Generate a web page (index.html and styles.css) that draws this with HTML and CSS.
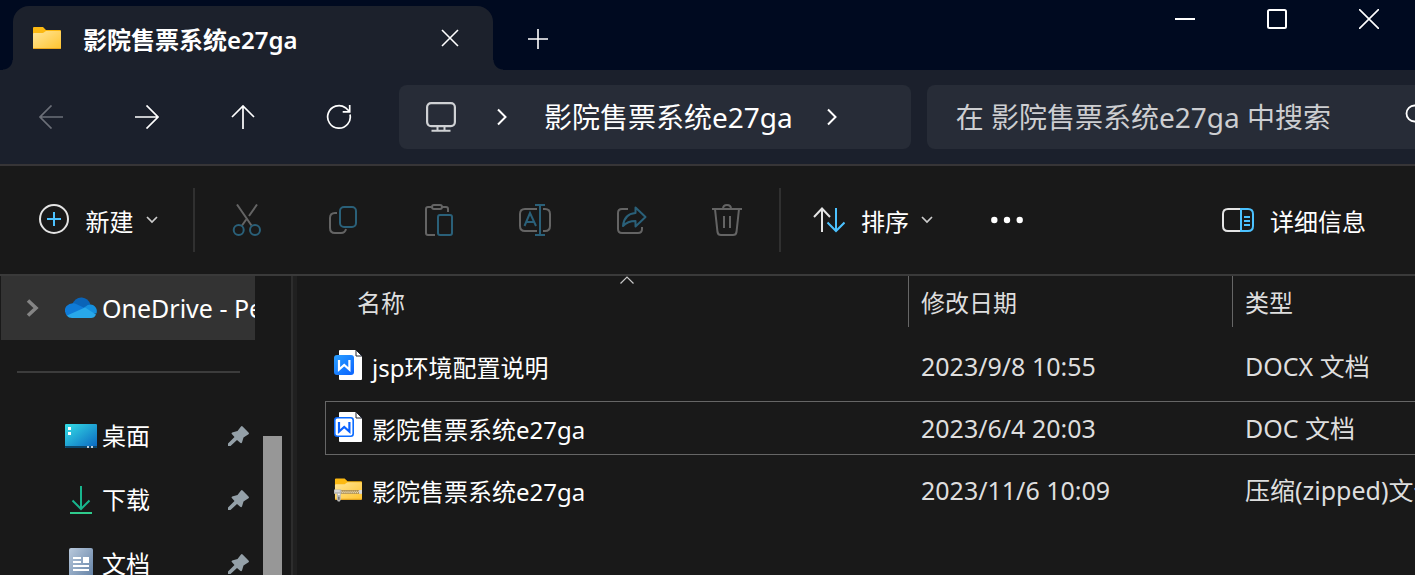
FILE: index.html
```html
<!DOCTYPE html>
<html lang="zh-CN">
<head>
<meta charset="utf-8">
<title>影院售票系统e27ga</title>
<link rel="stylesheet" href="styles.css">
</head>
<body>
<header class="titlebar">
  <div class="tab">
    <svg class="tab-icon" width="28" height="22" viewBox="0 0 28 22">
      <defs><linearGradient id="fold" x1="0" y1="0" x2="1" y2="1"><stop offset="0" stop-color="#ffe69a"/><stop offset="1" stop-color="#ffc42e"/></linearGradient></defs>
      <path d="M0 1q0-1 1-1h9l3 3h14q1 0 1 1v5H0z" fill="#fcb912"/>
      <path d="M0 7q0-1 1-1h9l3-2h14q1 0 1 1v16q0 1-1 1H1q-1 0-1-1z" fill="url(#fold)"/>
      <path d="M0 21h28q0 1-1 1H1q-1 0-1-1z" fill="#eaa51c"/>
    </svg>
    <span class="tab-title">影院售票系统e27ga</span>
    <button class="plain tab-close" aria-label="关闭标签页"><svg width="18" height="18" viewBox="0 0 18 18"><path d="M1 1l16 16M17 1L1 17" stroke="#fff" stroke-width="1.6" fill="none"/></svg></button>
  </div>
  <button class="plain tab-new" aria-label="新标签页"><svg width="20" height="20" viewBox="0 0 20 20"><path d="M0 10h20M10 0v20" stroke="#fff" stroke-width="1.6"/></svg></button>
  <div class="window-controls">
    <button class="plain" aria-label="最小化"><svg width="20" height="20" viewBox="0 0 20 20"><path d="M0 10h20" stroke="#fff" stroke-width="2"/></svg></button>
    <button class="plain" aria-label="最大化"><svg width="20" height="20" viewBox="0 0 20 20"><rect x="1" y="1" width="18" height="18" rx="1.5" fill="none" stroke="#fff" stroke-width="2"/></svg></button>
    <button class="plain" aria-label="关闭"><svg width="20" height="20" viewBox="0 0 20 20"><path d="M0 0l20 20M20 0L0 20" stroke="#fff" stroke-width="1.6"/></svg></button>
  </div>
</header>

<nav class="navbar">
  <div class="nav-buttons">
    <button class="plain" aria-label="后退" disabled><svg width="24" height="24" viewBox="0 0 24 24"><path d="M24 12H1M12.500.5L1 12l11.500 11.500" fill="none" stroke="#6b6f78" stroke-width="1.7"/></svg></button>
    <button class="plain" aria-label="前进"><svg width="24" height="24" viewBox="0 0 24 24"><path d="M0 12h23M11.500.5L23 12 11.500 23.500" fill="none" stroke="#fff" stroke-width="1.7"/></svg></button>
    <button class="plain" aria-label="向上"><svg width="24" height="24" viewBox="0 0 24 24"><path d="M12 24V1M1 12L12 1l11 11" fill="none" stroke="#fff" stroke-width="1.7"/></svg></button>
    <button class="plain" aria-label="刷新"><svg width="26" height="26" viewBox="0 0 26 26"><path d="M24 10.500A11.300 11.300 0 1 1 19.500 3.700L23.500 7.500M23.700 1v6.800h-7" fill="none" stroke="#fff" stroke-width="1.7"/></svg></button>
  </div>
  <div class="address">
    <svg class="pc" width="30" height="30" viewBox="0 0 30 30" fill="none" stroke="#cfd1d4"><rect x="1.100" y="1.100" width="27.800" height="23" rx="4" stroke-width="2.200"/><path d="M11.500 24v4M18.500 24v4M5.500 28.700h19" stroke-width="2"/></svg>
    <svg width="10" height="18" viewBox="0 0 10 18"><path d="M1 1.500L8.500 9 1 16.500" fill="none" stroke="#fff" stroke-width="2"/></svg>
    <span class="crumb">影院售票系统e27ga</span>
    <svg width="10" height="18" viewBox="0 0 10 18"><path d="M1 1.500L8.500 9 1 16.500" fill="none" stroke="#fff" stroke-width="2"/></svg>
  </div>
  <div class="search">
    <input type="text" aria-label="搜索" placeholder="在 影院售票系统e27ga 中搜索">
    <span class="search-icon"><svg width="26" height="26" viewBox="0 0 26 26"><path d="M16 15l9 9" stroke="#fff" stroke-width="1.800"/><circle cx="9.500" cy="9.500" r="8" fill="none" stroke="#fff" stroke-width="1.800"/></svg></span>
  </div>
</nav>

<div class="commands">
  <button class="plain cmd-new">
    <svg width="32" height="32" viewBox="0 0 32 32" fill="none"><circle cx="16" cy="15" r="14" stroke="#e4e4e4" stroke-width="2"/><path d="M9 15h14M16 8v14" stroke="#4cc2ff" stroke-width="2"/></svg>
    <span>新建</span>
    <svg class="caret" width="12" height="8" viewBox="0 0 12 8"><path d="M1 1l5 5 5-5" fill="none" stroke="#ccc" stroke-width="1.700"/></svg>
  </button>
  <span class="divider"></span>
  <div class="cmd-icons">
    <button class="plain" aria-label="剪切" disabled><svg width="32" height="32" viewBox="0 0 32 32" fill="none" stroke-width="2"><path d="M6 0.500l14.500 21M26 0.500l-8 11.500M15.200 15.500l-4.200 6" stroke="#646464"/><circle cx="7.700" cy="26" r="5" stroke="#2a6079"/><circle cx="24" cy="26" r="5" stroke="#2a6079"/></svg></button>
    <button class="plain" aria-label="复制" disabled><svg width="32" height="32" viewBox="0 0 32 32" fill="none" stroke-width="2"><path d="M10 9H8q-5 0-5 5v10q0 5 5 5h6q4 0 5-4" stroke="#646464"/><rect x="13" y="3" width="16" height="20" rx="4" stroke="#2a6079"/></svg></button>
    <button class="plain" aria-label="粘贴" disabled><svg width="32" height="32" viewBox="0 0 32 32" fill="none" stroke-width="2"><path d="M8.500 3H5q-2 0-2 2v24q0 2 2 2h7M19 3h4q2 0 2 2v3" stroke="#646464"/><rect x="9" y="1" width="10" height="4" rx="2" stroke="#646464"/><rect x="15" y="11" width="14" height="20" rx="2" stroke="#2a6079"/></svg></button>
    <button class="plain" aria-label="重命名" disabled><svg width="32" height="32" viewBox="0 0 32 32" fill="none" stroke-width="2"><path d="M18 5H6Q1 5 1 10v12q0 5 5 5h12M24 5h2q5 0 5 5v12q0 5-5 5h-2" stroke="#646464"/><path d="M16 1h10M21 1v30M16 31h10M5.500 22l5.500-13 6 13M7.500 18h8" stroke="#2a6079"/></svg></button>
    <button class="plain" aria-label="共享" disabled><svg width="32" height="32" viewBox="0 0 32 32" fill="none" stroke-width="2"><path d="M13 5H7Q3 5 3 9v16q0 4 4 4h16q4 0 4-4v-2" stroke="#646464"/><path d="M20.500 3.500l10 9.500-10 9.500v-5.500q-8 0-12.500 5 1-12 12.500-13z" stroke="#2a6079" stroke-linejoin="round"/></svg></button>
    <button class="plain" aria-label="删除" disabled><svg width="32" height="32" viewBox="0 0 32 32" fill="none" stroke="#646464" stroke-width="2"><path d="M1 5h30M12 5q0-4 4-4t4 4M4 5l2.500 23q.5 3 3.500 3h12q3 0 3.500-3L28 5M13 12v12M19 12v12"/></svg></button>
  </div>
  <span class="divider"></span>
  <button class="plain cmd-sort">
    <svg width="32" height="32" viewBox="0 0 32 32" fill="none" stroke-width="2"><path d="M9 28V5M1 13l8-8.500 8 8.500" stroke="#e4e4e4"/><path d="M23 4v23M14.500 18.500l8.500 8.500 8.500-8.500" stroke="#4cc2ff"/></svg>
    <span>排序</span>
    <svg class="caret" width="12" height="8" viewBox="0 0 12 8"><path d="M1 1l5 5 5-5" fill="none" stroke="#ccc" stroke-width="1.700"/></svg>
  </button>
  <button class="plain cmd-more" aria-label="更多"><svg width="32" height="8" viewBox="0 0 32 8" fill="#fff"><circle cx="3.300" cy="4" r="3.200"/><circle cx="16" cy="4" r="3.200"/><circle cx="28.700" cy="4" r="3.200"/></svg></button>
  <button class="plain cmd-details">
    <svg width="32" height="32" viewBox="0 0 32 32" fill="none" stroke-width="2"><path d="M19 5H6Q1 5 1 10v12q0 5 5 5h13" stroke="#e4e4e4"/><path d="M19 5h7q5 0 5 5v12q0 5-5 5h-7zM22 13h6M22 17h6M22 21h6" stroke="#4cc2ff"/></svg>
    <span>详细信息</span>
  </button>
</div>

<main class="content">
  <aside class="sidebar">
    <div class="tree">
      <a class="node drive" href="#">
        <svg class="expander" width="14" height="20" viewBox="0 0 14 20"><path d="M2 2.500L10 10l-8 7.500" fill="none" stroke="#858585" stroke-width="3.600"/></svg>
        <svg class="node-icon" width="32" height="22" viewBox="0 0 32 22"><path d="M7 8Q10 0 17 .5q6 .5 8.500 7L16 14z" fill="#0a64b8"/><path d="M2 19Q-2 13 1.500 9 5 5.500 10 6.500L22 12 4 20z" fill="#0f7bd8"/><path d="M20 10q4-3.500 8-2 5 3 3.500 8.500L22 17l-6-4z" fill="#1490df"/><path d="M2 18.500L20 10.500l11 7Q29.500 21 26 21H7q-3.500 0-5-2.500z" fill="#28a8ea"/></svg>
        <span>OneDrive - Personal</span>
      </a>
      <hr class="tree-rule">
      <a class="node" href="#">
        <svg class="node-icon" width="32" height="24" viewBox="0 0 32 24"><defs><linearGradient id="desk" x1="0" y1="0" x2="1" y2="1"><stop offset="0" stop-color="#35dfe6"/><stop offset="1" stop-color="#0a64c0"/></linearGradient></defs><rect width="32" height="24" rx="1" fill="url(#desk)"/><path d="M0 22h32v1q0 1-1 1H1q-1 0-1-1z" fill="#0b466b"/><path d="M3 3h3v3H3zM3 8h3v3H3z" fill="#fff"/><path d="M22 22h2v2h-2zM26 22h2v2h-2z" fill="#bcd"/></svg>
        <span>桌面</span>
        <svg class="pin" width="21" height="20" viewBox="0 0 21 20"><path d="M13 0.500Q13.800-.3 14.600.5L20.500 6.500q.9 1 0 1.800L15.500 11.500 14 16.500q-.6 1.200-1.800.3L9 14 2.500 20H0v-2.500L6.500 11 3.800 8q-.7-1 .4-1.600L9.500 5z" fill="#94a0a8"/></svg>
      </a>
      <a class="node" href="#">
        <svg class="node-icon" width="32" height="28" viewBox="0 0 32 28" fill="none" stroke-width="2"><path d="M16 0v23M7.500 14.500L16 23l8.500-8.500" stroke="#18b58d"/><path d="M5 27h22" stroke="#2fcb8d"/></svg>
        <span>下载</span>
        <svg class="pin" width="21" height="20" viewBox="0 0 21 20"><path d="M13 0.500Q13.800-.3 14.600.5L20.500 6.500q.9 1 0 1.800L15.500 11.500 14 16.500q-.6 1.200-1.800.3L9 14 2.500 20H0v-2.500L6.500 11 3.800 8q-.7-1 .4-1.600L9.500 5z" fill="#94a0a8"/></svg>
      </a>
      <a class="node" href="#">
        <svg class="node-icon" width="32" height="32" viewBox="0 0 32 32"><defs><linearGradient id="docs" x1="0" y1="0" x2="1" y2="1"><stop offset="0" stop-color="#b9c9dc"/><stop offset="1" stop-color="#5f7ea3"/></linearGradient></defs><rect x="4" width="24" height="32" rx="2" fill="url(#docs)"/><path d="M8 9h8v2H8zM8 13h8v2H8zM18 9h6v6h-6zM8 17h16v2H8zM8 21h16v2H8z" fill="#fff"/></svg>
        <span>文档</span>
        <svg class="pin" width="21" height="20" viewBox="0 0 21 20"><path d="M13 0.500Q13.800-.3 14.600.5L20.500 6.500q.9 1 0 1.800L15.500 11.500 14 16.500q-.6 1.200-1.800.3L9 14 2.500 20H0v-2.500L6.500 11 3.800 8q-.7-1 .4-1.600L9.500 5z" fill="#94a0a8"/></svg>
      </a>
    </div>
    <div class="scrollbar"><div class="thumb"></div></div>
  </aside>
  <section class="files">
    <table class="file-table">
      <colgroup><col class="col-name"><col class="col-date"><col></colgroup>
      <thead>
        <tr>
          <th class="head-name" scope="col"><div>名称</div><svg class="sort-caret" width="14" height="8" viewBox="0 0 14 8"><path d="M.5 7.500L7 1l6.500 6.500" fill="none" stroke="#c8c8c8" stroke-width="1.200"/></svg></th>
          <th scope="col"><div>修改日期</div></th>
          <th scope="col"><div>类型</div></th>
        </tr>
      </thead>
      <tbody>
        <tr>
          <td class="name"><div class="file">
            <svg width="28" height="32" viewBox="0 0 28 32"><defs><linearGradient id="wps" x1="0" y1="0" x2="1" y2="1"><stop offset="0" stop-color="#2aa0ff"/><stop offset="1" stop-color="#0a62ff"/></linearGradient></defs><path d="M5 1q0-1 1-1h16l6 6v23q0 1-1 1H6q-1 0-1-1z" fill="#fff"/><path d="M22 0v6h6z" fill="#fff" stroke="#222733" stroke-width="1"/><rect y="5" width="20" height="20" rx="3" fill="url(#wps)"/><path d="M5 10v9.500l5.200-4.500 5.200 4.500V10" fill="none" stroke="#fff" stroke-width="2.200"/></svg>
            <span>jsp环境配置说明</span></div></td>
          <td>2023/9/8 10:55</td>
          <td>DOCX 文档</td>
        </tr>
        <tr class="focused">
          <td class="name"><div class="file">
            <svg width="28" height="32" viewBox="0 0 28 32"><path d="M5 1q0-1 1-1h16l6 6v23q0 1-1 1H6q-1 0-1-1z" fill="#fff"/><path d="M22 0v6h6z" fill="#fff" stroke="#222733" stroke-width="1"/><rect x=".8" y="5.800" width="18.400" height="18.400" rx="2.500" fill="#fff" stroke="#0a6bff" stroke-width="1.600"/><path d="M5 10v9.500l5.200-4.500 5.200 4.500V10" fill="none" stroke="#0a62ff" stroke-width="2.200"/></svg>
            <span>影院售票系统e27ga</span></div></td>
          <td>2023/6/4 20:03</td>
          <td>DOC 文档</td>
        </tr>
        <tr>
          <td class="name"><div class="file">
            <svg width="28" height="24" viewBox="0 0 29 24"><path d="M1 1q0-1 1-1h9l3 3h14q1 0 1 1v5H1z" fill="#fcb912"/><path d="M1 7q0-1 1-1h9l3-2h14q1 0 1 1v16q0 1-1 1H2q-1 0-1-1z" fill="url(#fold)"/><path d="M1 21h28q0 1-1 1H2q-1 0-1-1z" fill="#eaa51c"/><path d="M6 12h23v4H6z" fill="#a98a4a"/><path d="M7 13.300h20M8 14.700h19" stroke="#f4ead0" stroke-width="1.200" stroke-dasharray="1 1"/><rect x="26" y="12" width="3" height="4" fill="#d8d8d8"/><path d="M0 11.500h7.500v4.500H7v6l-1 2H4l-1-2v-6H0z" fill="#b8b8b8"/><path d="M1 13h5M4 16.500h2" stroke="#f2f2f2" stroke-width="1.200"/><path d="M5 19v3" stroke="#666" stroke-width="1.400"/></svg>
            <span>影院售票系统e27ga</span></div></td>
          <td>2023/11/6 10:09</td>
          <td>压缩(zipped)文件夹</td>
        </tr>
      </tbody>
    </table>
  </section>
</main>
</body>
</html>
```
FILE: styles.css
```css
* { box-sizing: border-box; }

body {
  margin: 0;
  height: 100vh;
  display: flex;
  flex-direction: column;
  overflow: hidden;
  background: #191919;
  color: #fff;
  font: 24px/32px "Noto Sans", "Noto Sans CJK SC", sans-serif;
}

svg { display: block; flex: none; }

.plain {
  display: flex;
  align-items: center;
  justify-content: center;
  padding: 0;
  border: 0;
  background: none;
  color: inherit;
  font: inherit;
  white-space: nowrap;
}

/* Title bar and tab */
.titlebar {
  flex: none;
  display: flex;
  height: 70px;
  padding: 6px 0 0 13px;
  background: #000a20;
}

.tab {
  position: relative;
  display: flex;
  align-items: center;
  width: 480px;
  padding: 0 34px 0 20px;
  border-radius: 16px 16px 0 0;
  background: #1c212c;
}

.tab::before,
.tab::after {
  content: "";
  position: absolute;
  bottom: 0;
  width: 10px;
  height: 10px;
}

.tab::before { right: 100%; background: radial-gradient(circle at 0 0, transparent 9px, #1c212c 10px); }
.tab::after { left: 100%; background: radial-gradient(circle at 100% 0, transparent 9px, #1c212c 10px); }

.tab-title { margin-left: 22px; padding-top: 3px; font-weight: 600; }
.tab-close { margin-left: auto; }
.tab-new { width: 90px; padding-top: 2px; }

.window-controls {
  display: flex;
  align-items: flex-start;
  margin-left: auto;
}

.window-controls button { width: 92px; height: 26px; }

/* Navigation */
.navbar {
  flex: none;
  display: flex;
  align-items: center;
  height: 96px;
  padding-left: 3px;
  border-bottom: 2px solid #373537;
  background: #1b202c;
}

.nav-buttons { display: flex; }
.nav-buttons button { width: 96px; height: 64px; }

.address,
.search {
  display: flex;
  align-items: center;
  height: 64px;
  min-width: 0;
  background: #272c37;
  font-size: 28px;
  line-height: 40px;
}

.address { flex: 19 1 0; margin-left: 12px; padding-left: 27px; border-radius: 8px; }
.address .pc { margin-right: 41px; }
.crumb { margin: 0 34px 0 37px; white-space: nowrap; }

.search { flex: 18 1 0; margin-left: 16px; padding-left: 29px; border-radius: 8px 0 0 8px; }

.search input {
  flex: 1;
  min-width: 0;
  height: 48px;
  padding: 0;
  border: 0;
  outline: 0;
  background: none;
  color: #cdced1;
  font: inherit;
}

.search input::placeholder { color: #cdced1; opacity: 1; line-height: 48px; }
.search-icon { width: 10px; overflow: hidden; }

/* Command bar */
.commands {
  flex: none;
  display: flex;
  align-items: center;
  height: 110px;
  padding-right: 49px;
  border-bottom: 2px solid #3a3a3a;
}

.cmd-new { width: 193px; padding-left: 2px; }
.commands span { margin-left: 16px; padding-top: 3px; }
.caret { margin-left: 12px; }
.commands .divider { width: 2px; height: 64px; margin: 0; background: #303030; }
.cmd-icons { display: flex; padding: 0 4px; }
.cmd-icons button { width: 96px; height: 64px; }
.cmd-sort { padding-left: 32px; }
.cmd-more { margin-left: 58px; }
.cmd-details { margin-left: auto; }

/* Folder tree */
.content { flex: 1; display: flex; min-height: 0; }

.sidebar {
  flex: none;
  display: flex;
  width: 297px;
  border-right: 4px solid #202020;
  box-shadow: inset -2px 0 #2d2d2d;
  overflow: hidden;
}

.tree { width: 255px; overflow: hidden; }

.node {
  display: flex;
  align-items: center;
  gap: 5px;
  height: 64px;
  padding: 0 6px 0 65px;
  color: #fff;
  text-decoration: none;
  white-space: nowrap;
}

.drive { margin-left: 1px; padding-left: 25px; background: #333; font-size: 25px; }
.expander { margin-right: 20px; }
.pin { margin-left: auto; }

.tree-rule {
  height: 2px;
  margin: 31px 15px 31px 17px;
  border: 0;
  background: #3c3c3c;
}

.scrollbar { width: 27px; padding: 160px 0 0 8px; }
.thumb { width: 19px; height: 100%; background: #979797; }

/* File list */
.files { flex: 1; min-width: 0; padding-left: 28px; overflow: hidden; }

.file-table {
  width: 100%;
  margin-top: -8px;
  border-spacing: 0 8px;
  table-layout: fixed;
}

.col-name { width: 583px; }
.col-date { width: 324px; }

.file-table th {
  position: relative;
  height: 55px;
  padding: 0;
  color: #dedede;
  font-weight: 400;
  text-align: left;
  vertical-align: top;
}

.file-table th div {
  height: 51px;
  padding: 11px 0 0 12px;
  border-left: 1px solid #666;
}

.file-table .head-name div { padding-left: 32px; border-left: 0; }
.sort-caret { position: absolute; top: 0; left: 295px; }

.file-table td {
  height: 54px;
  padding: 0 0 0 13px;
  border: solid transparent;
  border-width: 1px 0;
  color: #dedede;
  font-size: 25px;
  white-space: nowrap;
  overflow: hidden;
}

.file-table .name {
  padding-left: 8px;
  border-left-width: 1px;
  color: #fff;
  font-size: 24px;
}

.file-table .focused td { border-color: #666; }
.file { display: flex; align-items: center; gap: 10px; }
.file span { padding-top: 3px; }
```
